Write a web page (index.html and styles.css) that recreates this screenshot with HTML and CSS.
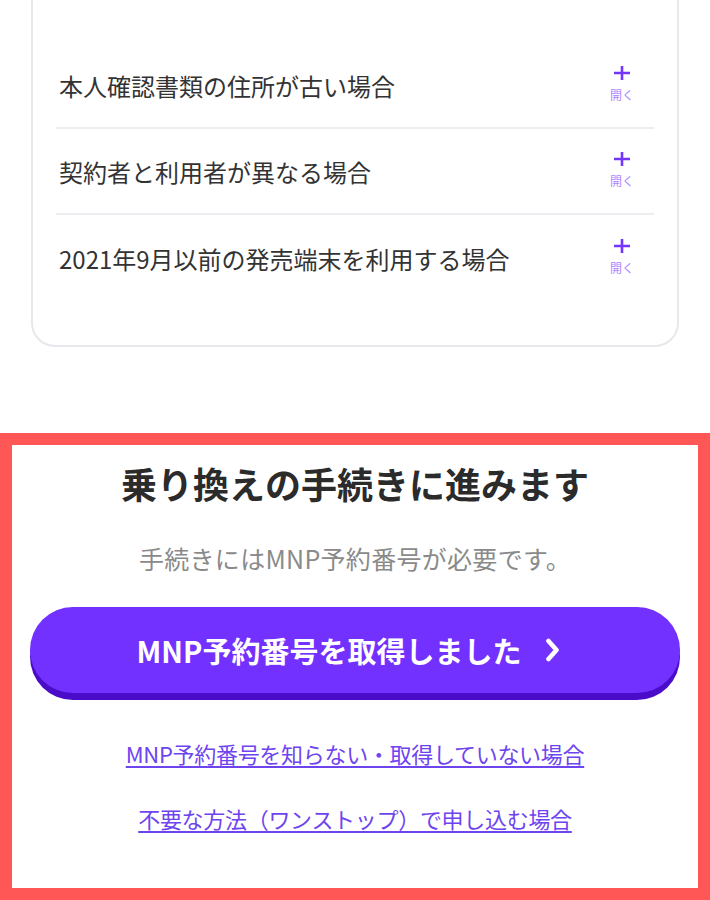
FILE: index.html
```html
<!DOCTYPE html>
<html lang="ja">
<head>
    <meta charset="UTF-8">
    <meta name="viewport" content="width=device-width, initial-scale=1.0">
    <title>乗り換えの手続き</title>
    <link rel="stylesheet" href="styles.css">
</head>
<body>
    <div class="faq-card">
        <div class="faq-row">
            <span class="faq-label">本人確認書類の住所が古い場合</span>
            <span class="faq-toggle">
                <svg class="plus" viewBox="0 0 18 16" width="18" height="16"><path d="M9 1v14M1 8h16" stroke="currentColor" stroke-width="2.6" fill="none"/></svg>
                <span class="toggle-text">開く</span>
            </span>
        </div>
        <div class="faq-row">
            <span class="faq-label">契約者と利用者が異なる場合</span>
            <span class="faq-toggle">
                <svg class="plus" viewBox="0 0 18 16" width="18" height="16"><path d="M9 1v14M1 8h16" stroke="currentColor" stroke-width="2.6" fill="none"/></svg>
                <span class="toggle-text">開く</span>
            </span>
        </div>
        <div class="faq-row">
            <span class="faq-label">2021年9月以前の発売端末を利用する場合</span>
            <span class="faq-toggle">
                <svg class="plus" viewBox="0 0 18 16" width="18" height="16"><path d="M9 1v14M1 8h16" stroke="currentColor" stroke-width="2.6" fill="none"/></svg>
                <span class="toggle-text">開く</span>
            </span>
        </div>
    </div>

    <section class="mnp-box">
        <h2 class="mnp-title">乗り換えの手続きに進みます</h2>
        <p class="mnp-note">手続きにはMNP予約番号が必要です。</p>
        <a href="#" class="mnp-button">
            MNP予約番号を取得しました
            <svg class="chevron" viewBox="0 0 16 24" width="16" height="24"><path d="M3.5 3l8 9-8 9" stroke="#fff" stroke-width="4.6" fill="none" stroke-linecap="round" stroke-linejoin="round"/></svg>
        </a>
        <a href="#" class="mnp-link">MNP予約番号を知らない・取得していない場合</a>
        <a href="#" class="mnp-link">不要な方法（ワンストップ）で申し込む場合</a>
    </section>
</body>
</html>
```

FILE: styles.css
```css
body {
    font-family: 'Noto Sans CJK JP', 'Noto Sans', sans-serif;
    background: #fff;
    color: #333;
    margin: 0;
    padding: 0;
    overflow: hidden;
}
.faq-card {
    margin: -24px 31px 0;
    padding: 65px 23px 44px;
    border: 2px solid #e6e8ec;
    border-radius: 24px;
    background: #fff;
}
.faq-row {
    display: flex;
    align-items: center;
    justify-content: space-between;
    height: 86px;
    box-sizing: border-box;
    padding: 0 20px 0 3px;
    border-bottom: 2px solid #eceef1;
}
.faq-row:last-child {
    border-bottom: none;
}
.faq-label {
    font-size: 24px;
}
.faq-toggle {
    display: flex;
    flex-direction: column;
    align-items: center;
    color: #7436ff;
    margin-top: -4px;
}
.toggle-text {
    font-size: 12px;
    line-height: 1;
    margin-top: 8px;
    color: #a98aff;
}
.mnp-box {
    margin-top: 86px;
    border: 12px solid #ff5656;
    padding: 13px 18px 54px;
    display: flex;
    flex-direction: column;
    align-items: center;
}
.mnp-title {
    font-size: 36px;
    font-weight: 700;
    line-height: 50px;
    margin: 0;
    color: #2b2b2b;
}
.mnp-note {
    font-size: 25px;
    line-height: 36px;
    margin: 32px 0 0;
    color: #8a8a8a;
    letter-spacing: 0.3px;
}
.mnp-button {
    display: flex;
    align-items: center;
    justify-content: center;
    gap: 24px;
    width: 100%;
    height: 86px;
    margin-top: 31px;
    border-radius: 43px;
    background: #7331ff;
    box-shadow: 0 7px 0 #4a0cc8;
    color: #fff;
    font-size: 29px;
    font-weight: 700;
    text-decoration: none;
    padding-right: 12px;
    box-sizing: border-box;
}
.mnp-link {
    font-size: 22px;
    line-height: 32px;
    color: #6e44ef;
    text-decoration: underline;
    text-underline-offset: 3px;
    letter-spacing: -0.3px;
}
.mnp-button + .mnp-link {
    margin-top: 44px;
}
.mnp-link + .mnp-link {
    margin-top: 33px;
}
```
